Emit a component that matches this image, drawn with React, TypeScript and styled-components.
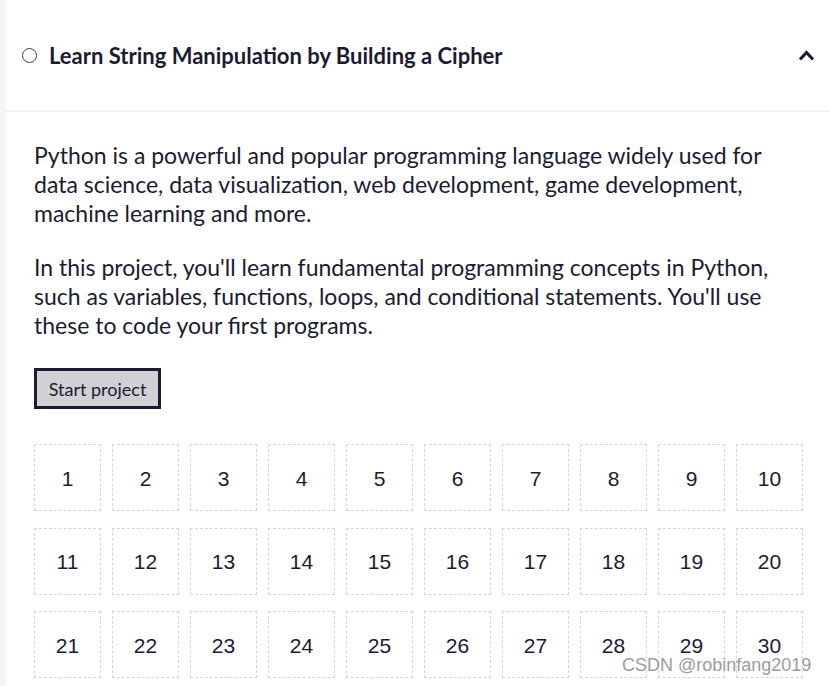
import styled, { createGlobalStyle } from "styled-components";

const GlobalStyle = createGlobalStyle`
  html, body {
    margin: 0;
    padding: 0;
    background: #ffffff;
  }
  body {
    font-family: Lato, "Noto Sans", sans-serif;
    color: #1b1b32;
  }
`;

const Page = styled.div`
  display: flex;
  min-height: 686px;
  position: relative;
  overflow: hidden;
`;

const SideStrip = styled.div`
  width: 6px;
  flex-shrink: 0;
  background: #f5f6f7;
`;

const Panel = styled.section`
  flex: 1;
  display: flex;
  flex-direction: column;
`;

const Header = styled.div`
  height: 110px;
  display: flex;
  align-items: center;
  padding: 0 15px 0 16px;
  border-bottom: 2px solid #f1f2f4;
  gap: 12px;
`;

const Radio = styled.span`
  width: 13px;
  height: 13px;
  border-radius: 50%;
  border: 1.5px solid #3b3b4f;
  flex-shrink: 0;
  margin-top: 1px;
`;

const Title = styled.h3`
  margin: 0;
  flex: 1;
  font-size: 22px;
  font-weight: 700;
  color: #1b1b32;
`;

const Body = styled.div`
  padding: 29px 27px 0 28px;
`;

const Para = styled.p`
  margin: 0 0 25px;
  font-size: 23px;
  line-height: 29px;
  color: #1b1b32;
`;

const StartButton = styled.button`
  margin-top: 3px;
  width: 127px;
  height: 41px;
  border: 3px solid #1b1b32;
  background: #d0d0d5;
  color: #1b1b32;
  font-family: Lato, "Noto Sans", sans-serif;
  font-size: 18px;
  padding: 0;
`;

const StepGrid = styled.div`
  margin-top: 35px;
  display: grid;
  grid-template-columns: repeat(10, 67px);
  column-gap: 11px;
  row-gap: 16.5px;
`;

const StepCell = styled.div`
  height: 67px;
  box-sizing: border-box;
  border: 1px dashed #d6d6da;
  display: flex;
  align-items: center;
  justify-content: center;
  font-family: "Liberation Sans", Arial, sans-serif;
  font-size: 21px;
  color: #1b1b32;
  padding-top: 2px;
`;

const Watermark = styled.div`
  position: absolute;
  left: 622px;
  top: 655px;
  font-family: "Liberation Sans", Arial, sans-serif;
  font-size: 18px;
  color: #9c9c9c;
  white-space: nowrap;
`;

const ChevronUp = () => (
  <svg width="17" height="12" viewBox="0 0 17 12" fill="none">
    <path d="M2 10.5 L8.5 3.5 L15 10.5" stroke="#1b1b32" strokeWidth="3" />
  </svg>
);

const steps = Array.from({ length: 30 }, (_, i) => i + 1);

export default function App() {
  return (
    <>
      <GlobalStyle />
      <Page>
        <SideStrip />
        <Panel>
          <Header>
            <Radio />
            <Title>Learn String Manipulation by Building a Cipher</Title>
            <ChevronUp />
          </Header>
          <Body>
            <Para>
              Python is a powerful and popular programming language widely used
              for data science, data visualization, web development, game
              development, machine learning and more.
            </Para>
            <Para>
              In this project, you'll learn fundamental programming concepts in
              Python, such as variables, functions, loops, and conditional
              statements. You'll use these to code your first programs.
            </Para>
            <StartButton>Start project</StartButton>
            <StepGrid>
              {steps.map((n) => (
                <StepCell key={n}>{n}</StepCell>
              ))}
            </StepGrid>
          </Body>
        </Panel>
        <Watermark>CSDN @robinfang2019</Watermark>
      </Page>
    </>
  );
}
